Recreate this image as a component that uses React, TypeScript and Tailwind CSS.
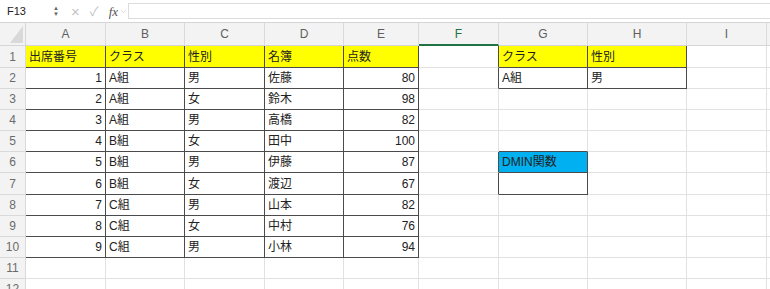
import { ChevronDown } from "lucide-react";

type Cell = { v?: string; num?: boolean; bg?: string; r?: boolean; b?: boolean };

const cols = [
  { key: "A", w: "w-[80px]" },
  { key: "B", w: "w-[79px]" },
  { key: "C", w: "w-[80px]" },
  { key: "D", w: "w-[79px]" },
  { key: "E", w: "w-[75px]" },
  { key: "F", w: "w-[80px]" },
  { key: "G", w: "w-[89px]" },
  { key: "H", w: "w-[99px]" },
  { key: "I", w: "w-[80px]" },
];

const rowHeights = [
  "h-[22px]",
  "h-[21px]",
  "h-[21px]",
  "h-[21px]",
  "h-[21px]",
  "h-[21px]",
  "h-[22px]",
  "h-[21px]",
  "h-[21px]",
  "h-[21px]",
  "h-[21px]",
  "h-[21px]",
];

const students = [
  ["1", "A組", "男", "佐藤", "80"],
  ["2", "A組", "女", "鈴木", "98"],
  ["3", "A組", "男", "高橋", "82"],
  ["4", "B組", "女", "田中", "100"],
  ["5", "B組", "男", "伊藤", "87"],
  ["6", "B組", "女", "渡辺", "67"],
  ["7", "C組", "男", "山本", "82"],
  ["8", "C組", "女", "中村", "76"],
  ["9", "C組", "男", "小林", "94"],
];

const cells: Record<string, Cell> = {};

// main table A1:E10
["出席番号", "クラス", "性別", "名簿", "点数"].forEach((h, i) => {
  cells[`${"ABCDE"[i]}1`] = { v: h, bg: "bg-[#ffff00]", r: true, b: true };
});
students.forEach((s, ri) => {
  s.forEach((v, ci) => {
    cells[`${"ABCDE"[ci]}${ri + 2}`] = { v, num: ci === 0 || ci === 4, r: true, b: true };
  });
});

// criteria G1:H2
cells.F1 = { r: true };
cells.F2 = { r: true };
cells.G1 = { v: "クラス", bg: "bg-[#ffff00]", r: true, b: true };
cells.H1 = { v: "性別", bg: "bg-[#ffff00]", r: true, b: true };
cells.G2 = { v: "A組", r: true, b: true };
cells.H2 = { v: "男", r: true, b: true };

// result G6:G7
cells.G5 = { b: true };
cells.F6 = { r: true };
cells.F7 = { r: true };
cells.G6 = { v: "DMIN関数", bg: "bg-[#00b0f0]", r: true, b: true };
cells.G7 = { r: true, b: true };

function FormulaBar() {
  return (
    <div className="flex h-[23px] items-center border-b border-[#d4d4d4] bg-white">
      <div className="flex h-full w-[62px] items-center justify-between pl-[7px] pr-[3px] text-[11px] text-[#222]">
        <span>F13</span>
        <span className="flex flex-col items-center leading-none text-[#666]">
          <span className="text-[6px]">▲</span>
          <span className="text-[6px]">▼</span>
        </span>
      </div>
      <div className="flex w-[66px] items-center gap-[10px] pl-[9px] text-[#c4c4c4]">
        <span className="text-[15px] leading-none">×</span>
        <span className="text-[13px] leading-none">✓</span>
        <span className="flex items-center">
          <span className="font-['Liberation_Serif',serif] text-[13px] italic leading-none text-[#555]">fx</span>
          <ChevronDown size={9} strokeWidth={1.5} className="ml-[1px] text-[#bdbdbd]" />
        </span>
      </div>
      <div className="h-[16px] flex-1 border border-r-0 border-[#dcdcdc] bg-white" />
    </div>
  );
}

function HeaderRow() {
  return (
    <div className="flex h-[23px] bg-[#f3f3f3]">
      <div className="relative w-[26px] shrink-0 border-b border-r border-[#d6d6d6]">
        <svg width="13" height="17" className="absolute bottom-[2px] right-[2px]">
          <polygon points="13,0 13,17 0,17" fill="#d9d9d9" />
        </svg>
      </div>
      {cols.map((c) => {
        const active = c.key === "F";
        return (
          <div
            key={c.key}
            className={`${c.w} flex shrink-0 items-center justify-center border-r border-[#dadada] text-[12px] ${
              active ? "border-b-2 border-b-[#217346] text-[#217346]" : "border-b border-b-[#d6d6d6] text-[#5f5f5f]"
            }`}
          >
            {c.key}
          </div>
        );
      })}
      <div className="flex-1 border-b border-[#d6d6d6]" />
    </div>
  );
}

function DataCell({ col, row }: { col: { key: string; w: string }; row: number }) {
  const c = cells[`${col.key}${row}`] ?? {};
  return (
    <div
      className={`${col.w} flex shrink-0 items-center overflow-hidden whitespace-nowrap border-b border-r px-[3px] text-[12px] text-[#222] ${
        c.bg ?? "bg-white"
      } ${c.r ? "border-r-[#4b4b4b]" : "border-r-[#e1e1e1]"} ${c.b ? "border-b-[#4b4b4b]" : "border-b-[#e1e1e1]"} ${
        c.num ? "justify-end" : "justify-start"
      }`}
    >
      {c.v}
    </div>
  );
}

export default function App() {
  return (
    <div className="h-[289px] w-[770px] overflow-hidden bg-white font-[family-name:'Liberation_Sans','Noto_Sans_CJK_JP',sans-serif]">
      <FormulaBar />
      <HeaderRow />
      {rowHeights.map((h, i) => (
        <div key={i} className={`flex ${h}`}>
          <div className="flex w-[26px] shrink-0 items-center justify-center border-b border-r border-[#d9d9d9] bg-[#f3f3f3] text-[12px] text-[#6b6b6b]">
            {i + 1}
          </div>
          {cols.map((c) => (
            <DataCell key={c.key} col={c} row={i + 1} />
          ))}
          <div className="flex-1 border-b border-[#e1e1e1]" />
        </div>
      ))}
    </div>
  );
}
